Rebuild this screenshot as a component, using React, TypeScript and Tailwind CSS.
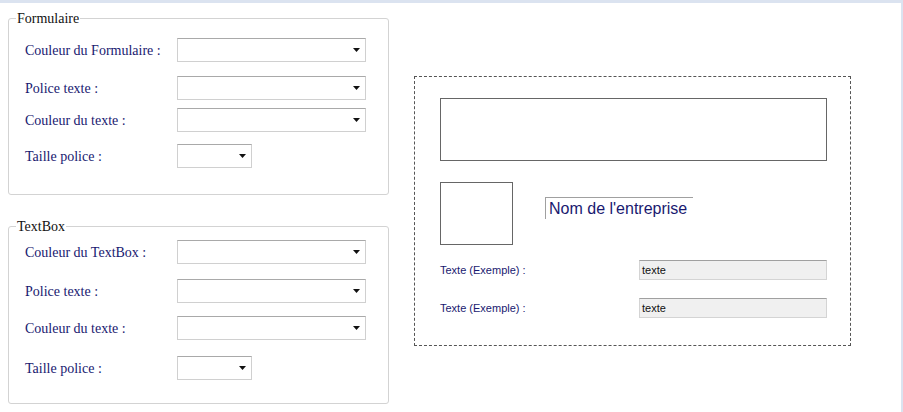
import React from "react";

type Row = { label: string; mt: string; small?: boolean };

function Select({ small }: { small?: boolean }) {
  return (
    <div
      className={
        "flex h-[24px] items-center justify-end border border-[#d0d0d0] border-t-[#a9a9a9] bg-white pr-[5px] " +
        (small ? "w-[75px]" : "w-[189px]")
      }
    >
      <svg width="7" height="4" viewBox="0 0 7 4">
        <path d="M0 0 H7 L3.5 4 Z" fill="#111" />
      </svg>
    </div>
  );
}

function Group({ title, rows, className }: { title: string; rows: Row[]; className: string }) {
  return (
    <fieldset className={"rounded-[3px] border border-[#d3d3d3] pl-[16px] " + className}>
      <legend className="-ml-[9px] px-px font-['Liberation_Serif',serif] text-[14px] leading-[15px] text-[#111]">
        {title}
      </legend>
      {rows.map((r) => (
        <div key={r.label + r.mt} className={"flex items-center " + r.mt}>
          <span className="w-[152px] pt-[2px] font-['Liberation_Serif',serif] text-[14px] leading-[18px] text-[#191970]">
            {r.label}
          </span>
          <Select small={r.small} />
        </div>
      ))}
    </fieldset>
  );
}

export default function App() {
  return (
    <div className="flex h-[412px] w-[903px] border-t-[3px] border-r-[2px] border-[#dbe3f0] bg-white">
      <div className="flex w-[389px] flex-col pl-[8px] pt-[8px]">
        <Group
          title="Formulaire"
          className="h-[184px] pt-[9px]"
          rows={[
            { label: "Couleur du Formulaire :", mt: "mt-[3px]" },
            { label: "Police texte :", mt: "mt-[14px]" },
            { label: "Couleur du texte :", mt: "mt-[8px]" },
            { label: "Taille police :", mt: "mt-[12px]", small: true },
          ]}
        />
        <Group
          title="TextBox"
          className="mt-[24px] h-[185px] pt-[3px]"
          rows={[
            { label: "Couleur du TextBox :", mt: "mt-[3px]" },
            { label: "Police texte :", mt: "mt-[15px]" },
            { label: "Couleur du texte :", mt: "mt-[13px]" },
            { label: "Taille police :", mt: "mt-[16px]", small: true },
          ]}
        />
      </div>
      <div className="pl-[25px] pt-[73px]">
        <div className="h-[270px] w-[437px] border border-dashed border-[#555] pl-[25px] pt-[21px] font-['Liberation_Sans',sans-serif]">
          <div className="h-[63px] w-[387px] border border-[#666]" />
          <div className="mt-[21px] flex items-start">
            <div className="h-[63px] w-[73px] border border-[#666]" />
            <div className="ml-[32px] mt-[15px] h-[22px] w-[148px] border-l border-t border-[#a0a0a0] pl-[3px] text-[16px] leading-[22px] text-[#191970]">
              Nom de l'entreprise
            </div>
          </div>
          {[0, 1].map((i) => (
            <div key={i} className={"flex items-center " + (i === 0 ? "mt-[15px]" : "mt-[18px]")}>
              <span className="w-[199px] text-[11px] text-[#191970]">Texte (Exemple) :</span>
              <div className="h-[20px] w-[188px] border border-[#d4d4d4] border-t-[#a0a0a0] bg-[#f0f0f0] pl-[2px] text-[11px] leading-[18px] text-[#111]">
                texte
              </div>
            </div>
          ))}
        </div>
      </div>
    </div>
  );
}
